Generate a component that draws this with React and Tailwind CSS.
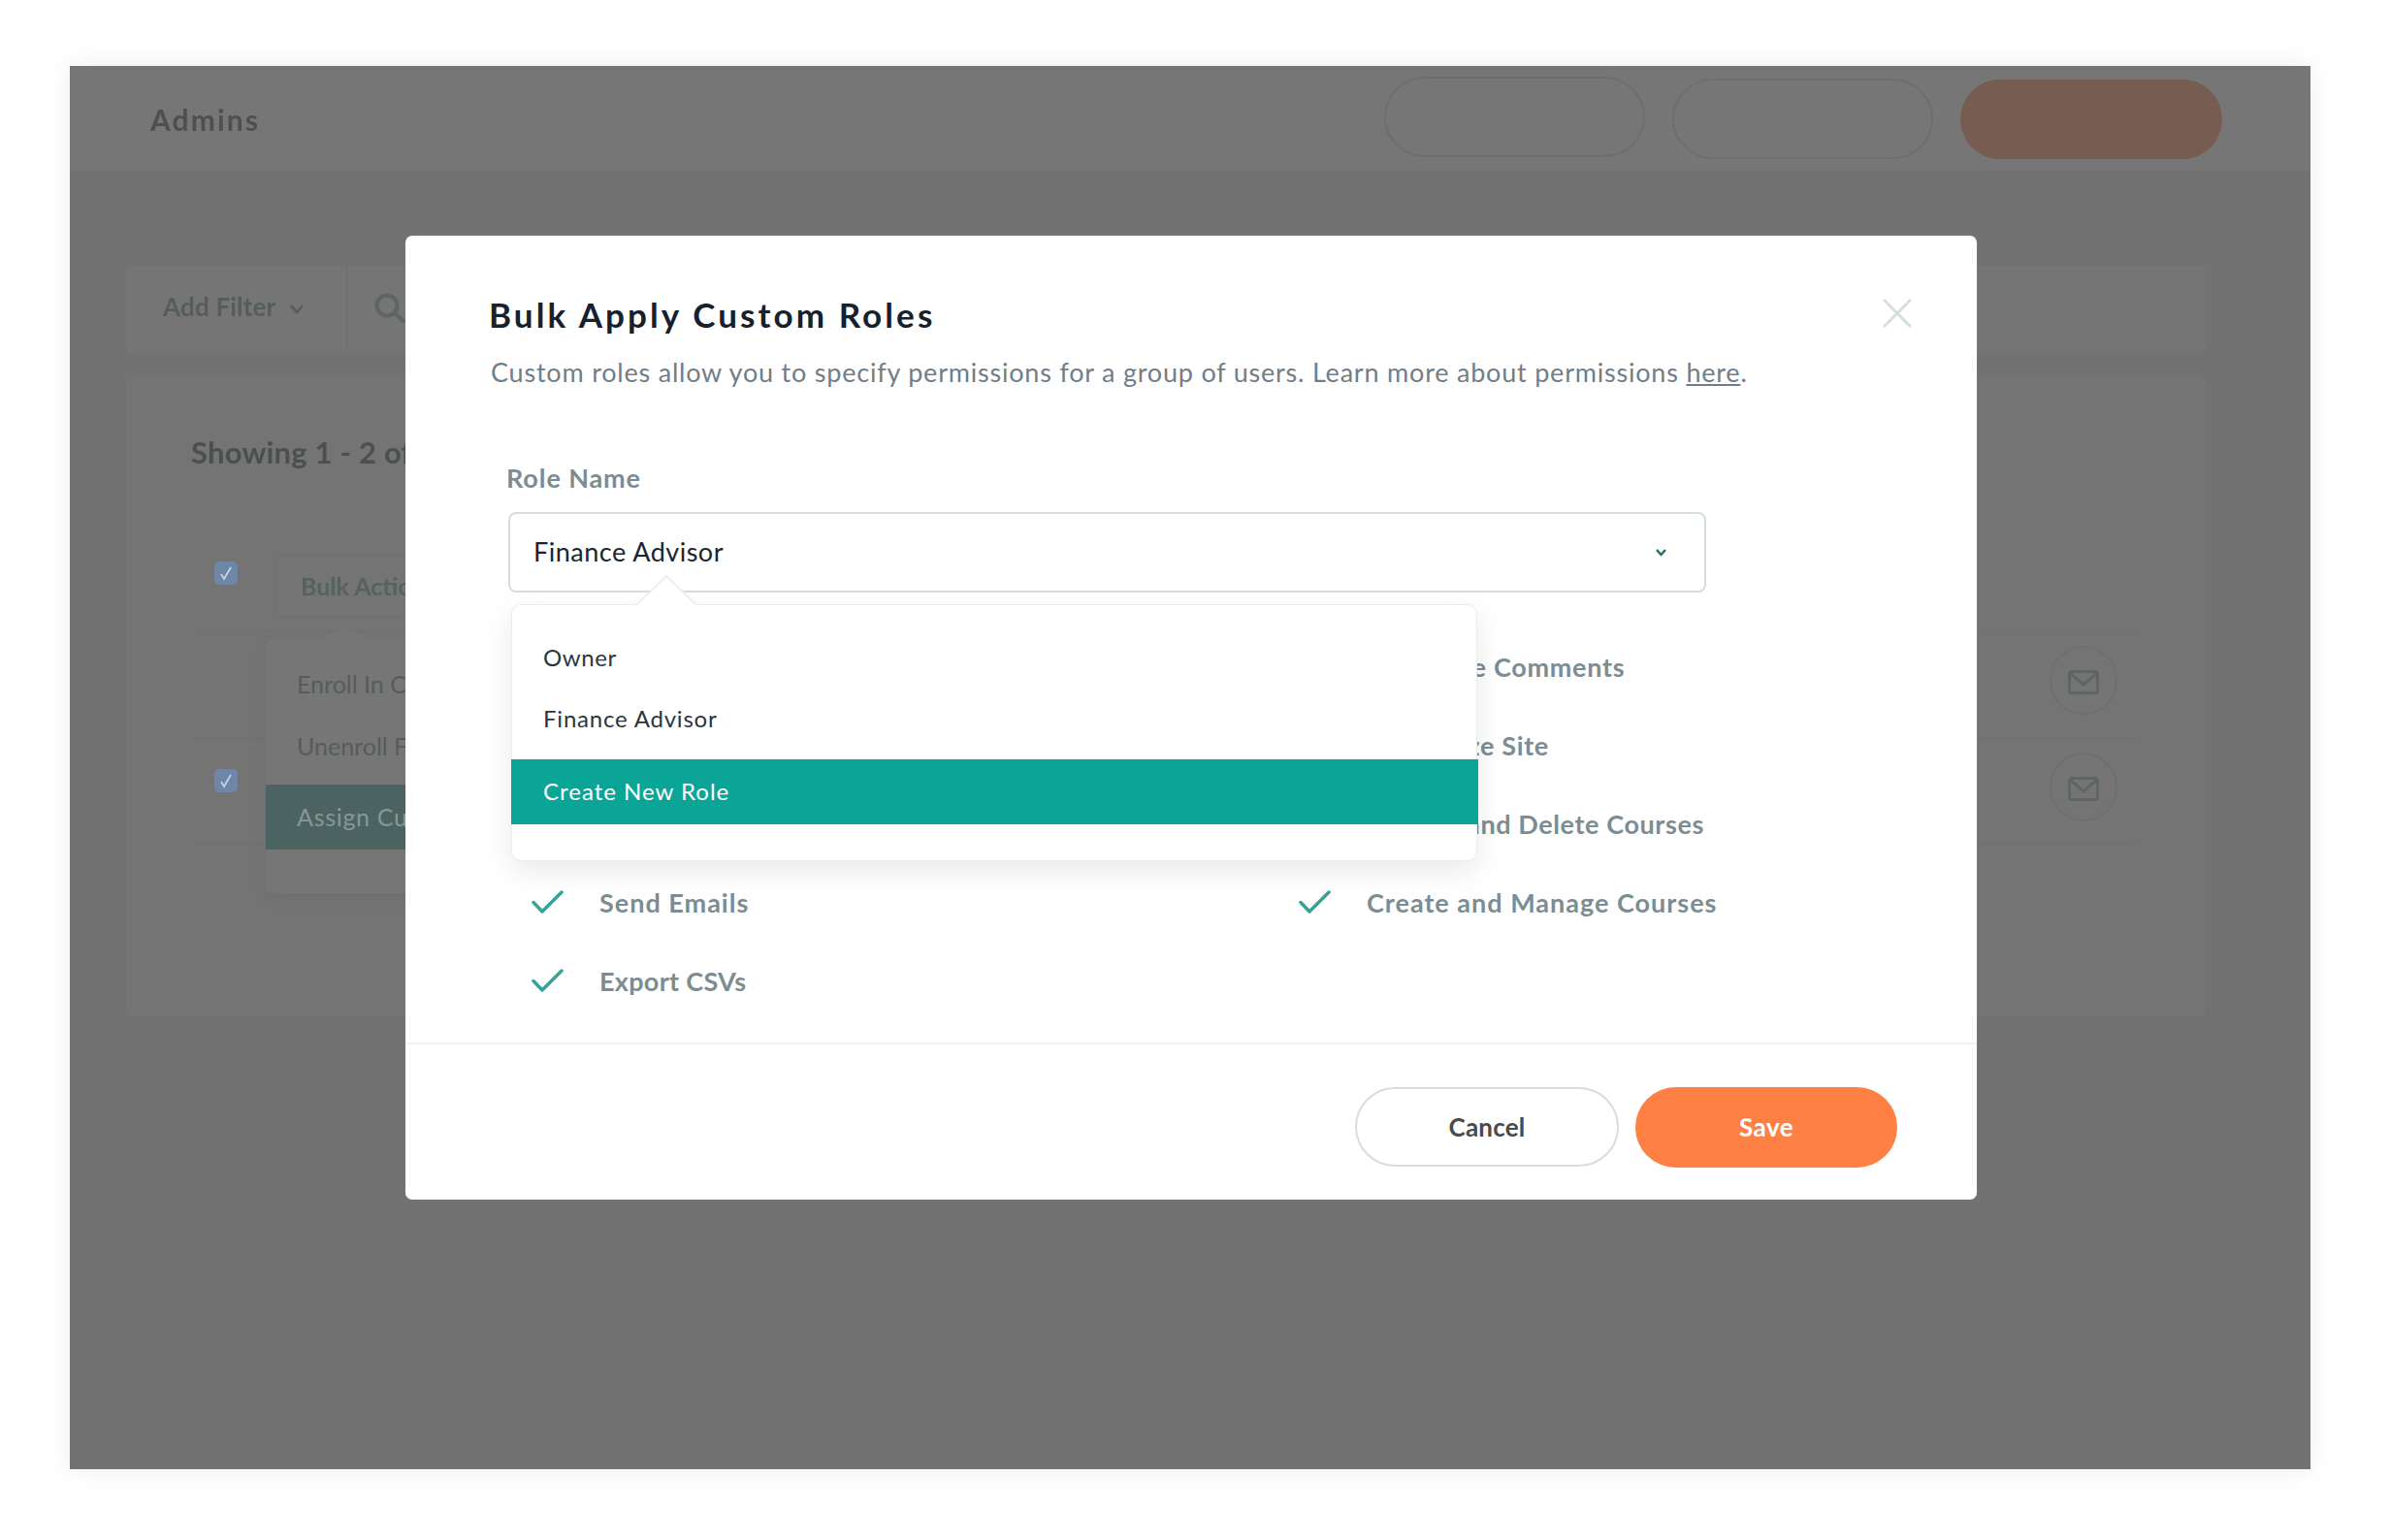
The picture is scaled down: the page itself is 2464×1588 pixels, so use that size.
const font = { fontFamily: '"Lato", "Noto Sans", sans-serif' };

function Check() {
  return (
    <svg width="33" height="24" viewBox="0 0 33 24" fill="none" className="shrink-0 -mt-[3px]">
      <path d="M2 12.5 L11 22 L31 2" stroke="#38a397" strokeWidth="3.5" strokeLinecap="round" strokeLinejoin="round" />
    </svg>
  );
}

function Perm({ label, tracking }) {
  return (
    <div className="flex items-center h-[81px] gap-[37px]">
      {label ? <Check /> : null}
      {label ? <span className={`text-[27px] font-bold text-[#7b8d93] whitespace-nowrap ${tracking}`}>{label}</span> : null}
    </div>
  );
}

function Mail() {
  return (
    <div className="w-[70px] h-[71px] rounded-full border-2 border-[#6f6f6f] flex items-center justify-center">
      <svg width="32" height="25" viewBox="0 0 32 25" fill="none" className="mt-[3px]">
        <rect x="1.5" y="1.5" width="29" height="22" rx="2.5" stroke="#5c6665" strokeWidth="3" />
        <path d="M2 3 L16 15 L30 3" stroke="#5c6665" strokeWidth="3" />
      </svg>
    </div>
  );
}

function Checkbox() {
  return (
    <div className="w-[24px] h-[24px] rounded-[5px] bg-[#6d87a8] flex items-center justify-center shrink-0">
      <svg width="14" height="16" viewBox="0 0 14 16" fill="none">
        <path d="M2 9 L5 14 L12 2" stroke="#c9d3dd" strokeWidth="1.8" />
      </svg>
    </div>
  );
}

export default function App() {
  return (
    <div className="w-[2464px] h-[1588px] bg-white pt-[68px] pl-[72px] overflow-hidden" style={font}>
      <div className="relative w-[2310px] h-[1447px] bg-[#727272] shadow-[0_0_24px_rgba(0,0,0,0.08)]">
        {/* dimmed page */}
        <div className="flex items-start justify-between h-[108px] bg-[#767676] pl-[83px] pr-[91px] pt-[14px]">
          <div className="mt-[23px] text-[30px] leading-[36px] font-bold tracking-[2.1px] text-[#4c5052] blur-[0.5px]">Admins</div>
          <div className="flex gap-[28px]">
            <div className="w-[269px] h-[83px] -mt-[3px] rounded-full border-2 border-[#6e6e6e]" />
            <div className="w-[269px] h-[83px] -mt-[1px] rounded-full border-2 border-[#6e6e6e]" />
            <div className="w-[270px] h-[82px] rounded-full bg-[#765c51]" />
          </div>
        </div>

        <div className="ml-[57px] mt-[97px] w-[2147px] h-[92px] rounded-[6px] bg-[#757575] border border-[#707070] flex items-center">
          <div className="w-[228px] h-full border-r border-[#6e6e6e] flex items-center pl-[38px] gap-[13px] pb-[5px]">
            <span className="text-[26px] font-bold tracking-[0.2px] text-[#545c5c] blur-[0.5px]">Add Filter</span>
            <svg width="16" height="11" viewBox="0 0 16 11" fill="none" className="mt-[3px]">
              <path d="M2 2 L8 9 L14 2" stroke="#545c5c" strokeWidth="2.5" />
            </svg>
          </div>
          <svg width="34" height="32" viewBox="0 0 34 32" fill="none" className="ml-[28px] -mt-[2px]">
            <circle cx="13" cy="13" r="10.5" stroke="#5f6464" strokeWidth="4" />
            <path d="M21 21 L31 30" stroke="#5f6464" strokeWidth="4" />
          </svg>
        </div>

        <div className="ml-[57px] mt-[21px] w-[2147px] h-[663px] rounded-[6px] bg-[#747474] border border-[#707070] px-[68px] pt-[59px]">
          <div className="h-[40px] leading-[40px] text-[31px] font-bold tracking-[0.2px] text-[#4b4f50] blur-[0.5px] whitespace-nowrap -ml-[1px]">Showing 1 - 2 of 2</div>
          <div className="mt-[86px] h-[79px] border-b border-[#707070] flex items-start pl-[23px]">
            <div className="mt-[7px]"><Checkbox /></div>
            <div className="ml-[39px] w-[240px] h-[64px] rounded-[6px] border border-[#6e6e6e] flex items-center pl-[25px] pt-[2px] text-[25px] font-bold text-[#56625f] blur-[0.5px] whitespace-nowrap">
              Bulk Actions
            </div>
          </div>
          <div className="h-[110px] border-b border-[#707070] flex justify-end pr-[24px] pt-[15px]">
            <Mail />
          </div>
          <div className="h-[111px] border-b border-[#707070] flex items-start justify-between pl-[23px] pr-[24px] pt-[15px]">
            <div className="mt-[17px]"><Checkbox /></div>
            <Mail />
          </div>
        </div>

        {/* dimmed bulk menu */}
        <div className="absolute left-[201px] top-[590px] w-[340px] h-[264px] rounded-[8px] bg-[#767676] border border-[#717171] shadow-[0_6px_20px_rgba(0,0,0,0.04)] pt-[26px]">
          <svg width="60" height="14" viewBox="0 0 60 14" className="absolute left-[52px] -top-[13px]">
            <path d="M0 14 L30 0 L60 14 Z" fill="#767676" />
          </svg>
          <div className="h-[40px] leading-[40px] pl-[32px] text-[25px] text-[#565b5c] whitespace-nowrap">Enroll In Courses</div>
          <div className="h-[40px] mt-[24px] leading-[40px] pl-[32px] text-[25px] text-[#565b5c] whitespace-nowrap">Unenroll From Courses</div>
          <div className="h-[67px] mt-[20px] flex items-center pl-[32px] bg-[#4b6361] text-[25px] tracking-[0.7px] text-[#889795] whitespace-nowrap">Assign Custom Roles</div>
        </div>

        {/* modal */}
        <div className="absolute left-[346px] top-[175px] w-[1620px] h-[994px] bg-white rounded-[7px] flex flex-col">
          <svg width="30" height="30" viewBox="0 0 30 30" fill="none" className="absolute left-[1523px] top-[65px]">
            <path d="M1 1 L29 29 M29 1 L1 29" stroke="#d5dedf" strokeWidth="3" />
          </svg>

          <div className="pl-[86px] pt-[61px] h-[40px] box-content leading-[40px] text-[35px] font-bold tracking-[3.1px] text-[#15212d]">
            Bulk Apply Custom Roles
          </div>
          <div className="pl-[88px] mt-[20px] h-[40px] leading-[40px] text-[27px] tracking-[0.79px] text-[#727d87] whitespace-nowrap">
            Custom roles allow you to specify permissions for a group of users. Learn more about permissions <span className="underline">here</span>.
          </div>

          <div className="pl-[104px] mt-[69px] h-[40px] leading-[40px] text-[27px] font-bold tracking-[0.9px] text-[#7b8d93]">Role Name</div>
          <div className="ml-[106px] mt-[15px] w-[1235px] h-[83px] rounded-[8px] border-2 border-[#d5dedf] flex items-center justify-between pl-[24px] pr-[38px]">
            <span className="text-[27px] tracking-[0.5px] text-[#1a2530]">Finance Advisor</span>
            <svg width="13" height="9" viewBox="0 0 13 9" fill="none">
              <path d="M2 2 L6.5 7 L11 2" stroke="#2d6a6a" strokeWidth="2.5" />
            </svg>
          </div>

          <div className="pl-[130px] mt-[37px] grid grid-cols-[791px_1fr]">
            <Perm />
            <Perm label="Moderate Comments" tracking="tracking-[0.7px]" />
            <Perm />
            <Perm label="Customize Site" tracking="tracking-[0.65px]" />
            <Perm />
            <Perm label="Archive and Delete Courses" tracking="tracking-[0.6px]" />
            <Perm label="Send Emails" tracking="tracking-[1px]" />
            <Perm label="Create and Manage Courses" tracking="tracking-[1px]" />
            <Perm label="Export CSVs" tracking="tracking-[0.3px]" />
          </div>

          <div className="mt-auto h-[162px] border-t-2 border-[#f0f2f2] flex justify-end items-start gap-[17px] pr-[82px] pt-[44px]">
            <div className="w-[272px] h-[82px] rounded-full border-2 border-[#d5dedf] flex items-center justify-center text-[26px] font-bold tracking-[0.2px] text-[#4a4a4a]">Cancel</div>
            <div className="w-[270px] h-[83px] rounded-full bg-[#ff8045] flex items-center justify-center text-[26px] font-bold tracking-[0.5px] text-white">Save</div>
          </div>

          {/* role dropdown */}
          <div className="absolute left-[109px] top-[380px] w-[996px] h-[265px] bg-white rounded-[10px] border border-[#e9eded] shadow-[0_10px_30px_rgba(0,0,0,0.09)] pt-[30px]">
            <svg width="64" height="32" viewBox="0 0 64 32" className="absolute left-[127px] -top-[31px]">
              <path d="M0 31 L32 1 L64 31 Z" fill="#ffffff" />
              <path d="M1 31 L32 1 L63 31" fill="none" stroke="#e9eded" strokeWidth="1.5" />
            </svg>
            <div className="h-[48px] leading-[48px] pl-[32px] text-[24px] tracking-[0.6px] text-[#2b353d]">Owner</div>
            <div className="h-[48px] mt-[15px] leading-[48px] pl-[32px] text-[24px] tracking-[0.8px] text-[#2b353d]">Finance Advisor</div>
            <div className="h-[67px] mt-[18px] -mr-[2px] -ml-[1px] pl-[33px] pb-[2px] flex items-center bg-[#0ba598] text-[24px] tracking-[1px] text-white">Create New Role</div>
          </div>
        </div>
      </div>
    </div>
  );
}
